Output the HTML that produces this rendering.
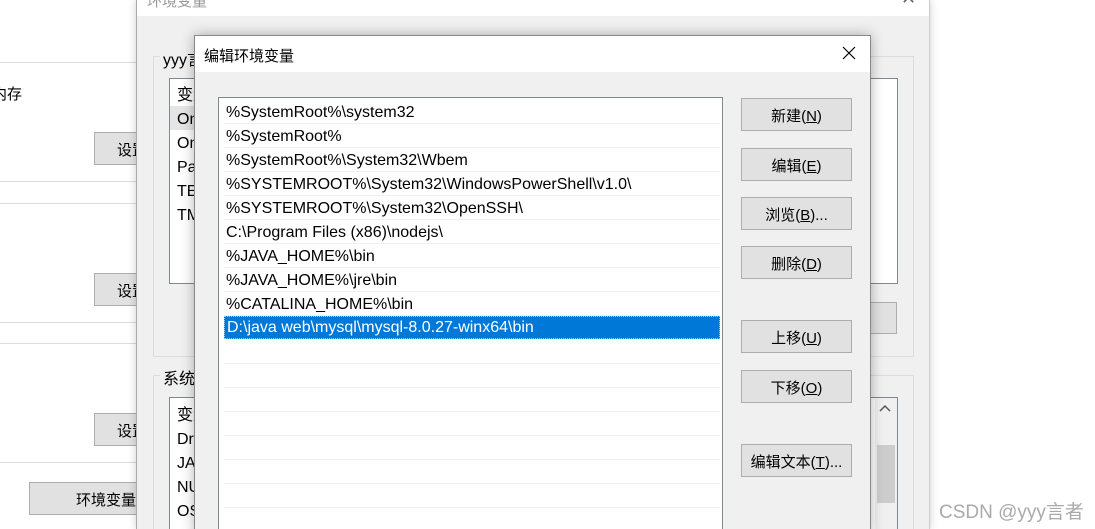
<!DOCTYPE html>
<html><head><meta charset="utf-8"><style>
*{margin:0;padding:0;box-sizing:border-box}
html,body{width:1095px;height:529px;overflow:hidden}
body{background:#fff;position:relative;font-family:"Liberation Sans","Noto Sans CJK SC",sans-serif;font-size:16px;color:#000}
.a{position:absolute}
.hl{position:absolute;left:0;width:137px;height:1px;background:#dcdcdc}
.btn{position:absolute;background:#e1e1e1;border:1px solid #adadad;text-align:center;line-height:35px;font-size:15px;white-space:nowrap}
.row{position:absolute;left:224px;width:496px;height:24px;border-bottom:1px solid #f0f0f0;padding-left:2px;line-height:25px;font-size:16px;white-space:nowrap}
u{text-decoration:underline}
</style></head><body>
<div class="hl" style="top:62px"></div>
<div class="hl" style="top:181px"></div>
<div class="hl" style="top:203px"></div>
<div class="hl" style="top:322px"></div>
<div class="hl" style="top:343px"></div>
<div class="hl" style="top:462px"></div>
<div class="a" style="left:-8px;top:83px;font-size:15px">内存</div>
<div class="btn" style="left:94px;top:132px;width:60px;height:33px;text-align:left;padding-left:22px">设置</div>
<div class="btn" style="left:94px;top:273px;width:60px;height:33px;text-align:left;padding-left:22px">设置</div>
<div class="btn" style="left:94px;top:413px;width:60px;height:33px;text-align:left;padding-left:22px">设置</div>
<div class="btn" style="left:29px;top:482px;width:130px;height:33px;text-align:left;padding-left:46px">环境变量</div>

<div class="a" style="left:136px;top:0;width:794px;height:529px;background:#f0f0f0;border-left:1px solid #aaa;border-right:1px solid #ccc;box-shadow:0 0 8px rgba(0,0,0,.2)"></div>
<div class="a" style="left:137px;top:0;width:792px;height:16px;background:#fff;overflow:hidden"><span style="position:absolute;left:10px;top:-10px;color:#999;font-size:15px">环境变量</span><span style="position:absolute;left:764px;top:-12px;color:#666;font-size:18px">✕</span></div>
<div class="a" style="left:153px;top:56px;width:761px;height:301px;border:1px solid #dcdcdc"></div>
<div class="a" style="left:160px;top:46px;background:#f0f0f0;padding:0 3px;font-size:16px">yyy言</div>
<div class="a" style="left:169px;top:78px;width:729px;height:206px;background:#fff;border:1px solid #828790"></div>
<div class="a" style="left:170px;top:106px;width:30px;height:24px;background:#e5e5e5"></div>
<div class="a" style="left:177px;top:84px;line-height:24px;font-size:16px">变量<br>On<br>On<br>Pa<br>TE<br>TM</div>
<div class="btn" style="left:860px;top:302px;width:37px;height:32px"></div>
<div class="a" style="left:153px;top:375px;width:761px;height:160px;border:1px solid #dcdcdc"></div>
<div class="a" style="left:160px;top:365px;background:#f0f0f0;padding:0 3px;font-size:16px">系统变</div>
<div class="a" style="left:169px;top:397px;width:729px;height:140px;background:#fff;border:1px solid #828790"></div>
<div class="a" style="left:177px;top:404px;line-height:24px;font-size:16px">变量<br>Dr<br>JA<br>NU<br>OS</div>
<div class="a" style="left:875px;top:398px;width:22px;height:131px;background:#f0f0f0"></div>
<div class="a" style="left:877px;top:445px;width:18px;height:58px;background:#cdcdcd"></div>
<svg class="a" style="left:879px;top:404px" width="12" height="10"><path d="M1 7L6 2L11 7" stroke="#555" stroke-width="1.5" fill="none"/></svg>

<div class="a" style="left:194px;top:35px;width:677px;height:500px;background:#f0f0f0;border:1px solid #888;box-shadow:0 0 12px rgba(0,0,0,.3)"></div>
<div class="a" style="left:195px;top:36px;width:675px;height:36px;background:#fff"></div>
<div class="a" style="left:204px;top:45px;font-size:15px">编辑环境变量</div>
<svg class="a" style="left:842px;top:46px" width="14" height="14"><path d="M1 1L13 13M13 1L1 13" stroke="#000" stroke-width="1.2"/></svg>
<div class="a" style="left:218px;top:97px;width:505px;height:440px;background:#fff;border:1px solid #828790"></div>
<div class="row" style="top:100px">%SystemRoot%\system32</div>
<div class="row" style="top:124px">%SystemRoot%</div>
<div class="row" style="top:148px">%SystemRoot%\System32\Wbem</div>
<div class="row" style="top:172px">%SYSTEMROOT%\System32\WindowsPowerShell\v1.0\</div>
<div class="row" style="top:196px">%SYSTEMROOT%\System32\OpenSSH\</div>
<div class="row" style="top:220px">C:\Program Files (x86)\nodejs\</div>
<div class="row" style="top:244px">%JAVA_HOME%\bin</div>
<div class="row" style="top:268px">%JAVA_HOME%\jre\bin</div>
<div class="row" style="top:292px">%CATALINA_HOME%\bin</div>
<div class="row" style="top:316px;background:#0078d7;color:#fff;border:1px dotted #9cf;line-height:22px;height:23px">D:\java web\mysql\mysql-8.0.27-winx64\bin</div>
<div class="row" style="top:340px"></div>
<div class="row" style="top:364px"></div>
<div class="row" style="top:388px"></div>
<div class="row" style="top:412px"></div>
<div class="row" style="top:436px"></div>
<div class="row" style="top:460px"></div>
<div class="row" style="top:484px"></div>
<div class="row" style="top:508px"></div>

<div class="btn" style="left:741px;top:98px;width:111px;height:33px">新建(<u>N</u>)</div>
<div class="btn" style="left:741px;top:148px;width:111px;height:33px">编辑(<u>E</u>)</div>
<div class="btn" style="left:741px;top:197px;width:111px;height:33px">浏览(<u>B</u>)...</div>
<div class="btn" style="left:741px;top:246px;width:111px;height:33px">删除(<u>D</u>)</div>
<div class="btn" style="left:741px;top:320px;width:111px;height:33px">上移(<u>U</u>)</div>
<div class="btn" style="left:741px;top:370px;width:111px;height:33px">下移(<u>O</u>)</div>
<div class="btn" style="left:741px;top:444px;width:111px;height:33px">编辑文本(<u>T</u>)...</div>

<div class="a" style="left:939px;top:497px;font-size:19px;color:#aaa">CSDN @yyy言者</div>
</body></html>
